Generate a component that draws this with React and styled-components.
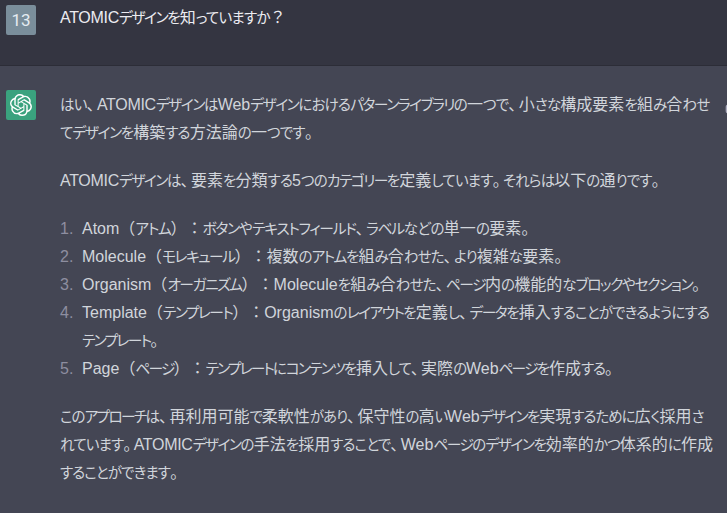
import React from 'react'
import styled, { createGlobalStyle } from 'styled-components'
import { SiOpenai } from 'react-icons/si'

// [text, kana tracking in px]
const paragraphs = {
    intro: [
        ['はい、ATOMICデザインはWebデザインにおけるパターンライブラリの一つで、小さな構成要素を組み合わせ', -0.8],
        ['てデザインを構築する方法論の一つです。', -0.8],
    ],
    summary: [
        ['ATOMICデザインは、要素を分類する5つのカテゴリーを定義しています。それらは以下の通りです。', -0.82],
    ],
    closing: [
        ['このアプローチは、再利用可能で柔軟性があり、保守性の高いWebデザインを実現するために広く採用さ', -1.02],
        ['れています。ATOMICデザインの手法を採用することで、Webページのデザインを効率的かつ体系的に作成', -0.85],
        ['することができます。', -0.9],
    ],
}

const steps = [
    [['Atom（アトム）：ボタンやテキストフィールド、ラベルなどの単一の要素。', -0.55]],
    [['Molecule（モレキュール）：複数のアトムを組み合わせた、より複雑な要素。', -0.84]],
    [['Organism（オーガニズム）：Moleculeを組み合わせた、ページ内の機能的なブロックやセクション。', -0.81]],
    [
        ['Template（テンプレート）：Organismのレイアウトを定義し、データを挿入することができるようにする', -0.85],
        ['テンプレート。', -1],
    ],
    [['Page（ページ）：テンプレートにコンテンツを挿入して、実際のWebページを作成する。', -1.15]],
]

// hiragana, katakana, punctuation, latin, everything else
const RUNS = /[\u3041-\u309f]+|[\u30a0-\u30ff]+|[、。]|[A-Za-z0-9]+|[^\u3041-\u30ff、。A-Za-z0-9]+/g

const Text = ({ children, tracking }) => (
    <Line>
        {children.match(RUNS).map((run, i) => {
            if (/[\u3041-\u309f]/.test(run)) return <Hiragana key={i} $tracking={tracking}>{run}</Hiragana>
            if (/[\u30a0-\u30ff]/.test(run)) return <Katakana key={i} $tracking={tracking}>{run}</Katakana>
            if (/[、。]/.test(run)) return <Mark key={i}>{run}</Mark>
            if (/[A-Z]{3}/.test(run)) return <Caps key={i}>{run}</Caps>
            return <React.Fragment key={i}>{run}</React.Fragment>
        })}
    </Line>
)

const Paragraph = ({ lines }) => (
    <div>
        {lines.map(([text, tracking]) => <Text key={text} tracking={tracking}>{text}</Text>)}
    </div>
)

const ThumbIcon = () => (
    <svg width="16" height="16" viewBox="0 0 24 24" fill="none" stroke="currentColor" strokeWidth="2" strokeLinecap="round" strokeLinejoin="round">
        <path d="M14 9V5a3 3 0 0 0-3-3l-4 9v11h11.28a2 2 0 0 0 2-1.7l1.38-9a2 2 0 0 0-2-2.3zM7 22H4a2 2 0 0 1-2-2v-7a2 2 0 0 1 2-2h3" />
    </svg>
)

const App = () => {
    return (
        <>
            <GlobalStyle />
            <Chat>
                <Message>
                    <Avatar>13</Avatar>
                    <Body $question>
                        <Text tracking={-0.76}>ATOMICデザインを知っていますか？</Text>
                    </Body>
                </Message>

                <Message $reply>
                    <Avatar $bot><SiOpenai size={22} /></Avatar>
                    <Body>
                        <Paragraph lines={paragraphs.intro} />
                        <Paragraph lines={paragraphs.summary} />
                        <Steps>
                            {steps.map((lines, i) => (
                                <Step key={i}>
                                    <Index>{i + 1}.</Index>
                                    <Paragraph lines={lines} />
                                </Step>
                            ))}
                        </Steps>
                        <Paragraph lines={paragraphs.closing} />
                    </Body>
                    <Feedback>
                        <ThumbIcon />
                    </Feedback>
                </Message>
            </Chat>
        </>
    )
}

const GlobalStyle = createGlobalStyle`
    * {
        box-sizing: border-box;
    }

    body {
        margin: 0;
        background: #444654;
        overflow: hidden;
    }
`

const Chat = styled.main`
    display: flex;
    flex-direction: column;
    height: 513px;
    overflow: hidden;
    font-family: "Liberation Sans", "Noto Sans CJK JP", sans-serif;
    font-size: 16px;
    line-height: 28px;
    text-spacing-trim: space-all;
`

const Message = styled.section`
    display: flex;
    gap: 24px;
    flex: ${(p) => (p.$reply ? '1' : '0 0 66px')};
    padding: ${(p) => (p.$reply ? '24px' : '5px')} 0 0 6px;
    color: ${(p) => (p.$reply ? '#d1d5db' : '#ececf1')};
    background: ${(p) => (p.$reply ? '#444654' : '#343541')};
    border-bottom: ${(p) => (p.$reply ? '0' : '1px solid #2c2d37')};
    overflow: hidden;
`

const Avatar = styled.div`
    display: flex;
    align-items: center;
    justify-content: center;
    flex: 0 0 30px;
    height: 30px;
    border-radius: 2px;
    font-family: Roboto, sans-serif;
    font-size: 17px;
    color: ${(p) => (p.$bot ? '#fff' : '#e4ebf1')};
    background: ${(p) => (p.$bot ? '#3aa27e' : '#7a8e9b')};
`

const Body = styled.div`
    display: flex;
    flex-direction: column;
    gap: 20px;
    flex: 0 0 660px;
    margin-top: ${(p) => (p.$question ? '-1px' : '1px')};
`

const Line = styled.div`
    height: 28px;
    white-space: nowrap;
`

const Hiragana = styled.span`
    font-size: 14.5px;
    font-feature-settings: "palt";
    letter-spacing: ${(p) => p.$tracking}px;
`

const Katakana = styled.span`
    font-size: 14.75px;
    font-feature-settings: "palt";
    letter-spacing: ${(p) => p.$tracking - 0.7}px;
`

const Mark = styled.span`
    font-feature-settings: "palt";
    letter-spacing: 2.3px;
`

const Caps = styled.span`
    letter-spacing: -0.3px;
`

const Steps = styled.ol`
    margin: 0;
    padding: 0;
    list-style: none;
`

const Step = styled.li`
    display: flex;
`

const Index = styled.span`
    flex: 0 0 22px;
    color: #8e8ea0;
`

const Feedback = styled.div`
    flex: 0 0 16px;
    padding-top: 5px;
    margin-left: -19px;
    color: #acacbe;
`

export default App
